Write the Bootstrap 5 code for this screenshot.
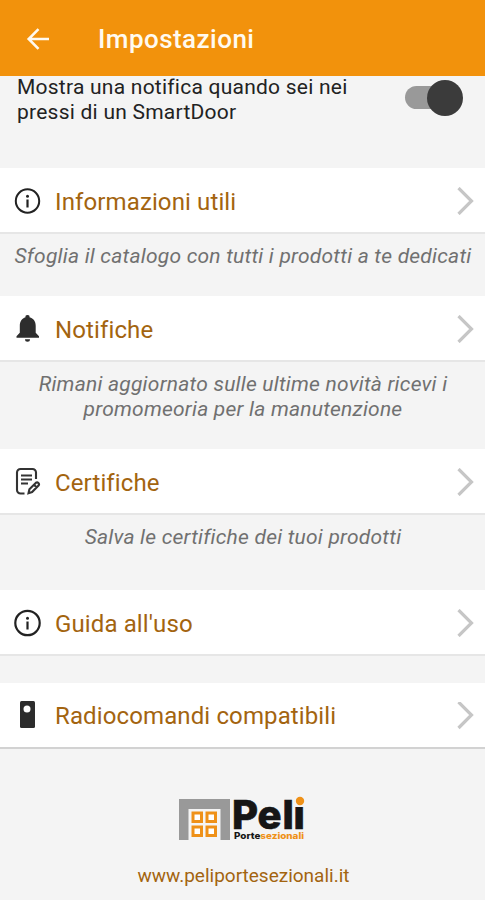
<!DOCTYPE html>
<html lang="it">
<head>
<meta charset="utf-8">
<meta name="viewport" content="width=device-width, initial-scale=1">
<title>Impostazioni</title>
<link href="https://cdn.jsdelivr.net/npm/bootstrap@5.3.0/dist/css/bootstrap.min.css" rel="stylesheet">
<style>
body{font-family:Roboto,"Liberation Sans",sans-serif;background:#f4f4f4;height:900px;overflow:hidden}
.topbar{height:76px;background:#f2920c;padding:2px 0 0 26px}
.topbar h1{font-size:26px;font-weight:500;letter-spacing:.45px;line-height:32px;margin-left:48px;color:#fffaf0}
.notice{height:92px;padding:0 22px 0 17px;color:#222}
.notice p{font-size:21px;line-height:25px;letter-spacing:.24px;margin-top:-1px}
.toggle-track{width:54px;height:23px;border-radius:12px;background:#999;margin:10px 4px 0 0}
.toggle-knob{width:36px;height:36px;border-radius:50%;background:#3b3b3b;flex:none;margin:0 -4px 0 auto}
.entry{height:66px;background:#fff;border-bottom:2px solid #e6e6e6;padding:2px 10px 0 14px;color:#a3640f;text-decoration:none;font-size:24px;letter-spacing:.12px}
.entry:hover{color:#a3640f}
.entry span{padding-top:2px}
.entry svg:first-child{margin-right:14px}
.entry.last{border-bottom-color:#d2d2d2}
.entry.last span{padding-top:0}
.hint{font-size:21px;line-height:25px;font-style:italic;color:#707070;text-align:center;padding:10px 0 0 1px;letter-spacing:.22px}
.site{font-size:19px;color:#a3640f;text-decoration:none;letter-spacing:0;line-height:24px;margin:19px 0 0 2px}
.ic{width:27px;height:28px;flex:none;overflow:visible}
.chev{width:18px;height:28px;flex:none}
.logo{overflow:visible}
.h-a{height:62px}.h-b{height:87px}.h-c{height:75px}.h-d{height:27px}
</style>
<script src="https://cdn.jsdelivr.net/npm/bootstrap@5.3.0/dist/js/bootstrap.bundle.min.js"></script>
</head>
<body>
<header class="topbar d-flex align-items-center">
  <svg width="24" height="24" viewBox="0 0 24 24" fill="none" stroke="#fffaf0" stroke-width="2.600"><path d="M23 12H3.500M12.500 2.200L2.700 12l9.800 9.800"/></svg>
  <h1 class="mb-0">Impostazioni</h1>
</header>
<main>
  <section class="notice d-flex justify-content-between">
    <p class="mb-0">Mostra una notifica quando sei nei<br>pressi di un SmartDoor</p>
    <div class="toggle-track d-flex align-items-center"><div class="toggle-knob"></div></div>
  </section>

  <a href="#" class="entry d-flex align-items-center">
    <svg class="ic" viewBox="0 0 27 28"><circle cx="13.500" cy="14" r="11.700" fill="none" stroke="#222" stroke-width="2"/><circle cx="13.500" cy="9.300" r="1.500" fill="#222"/><path d="M13.500 12.500v8" stroke="#222" stroke-width="2.200"/></svg>
    <span>Informazioni utili</span>
    <svg class="chev ms-auto" viewBox="0 0 18 28" fill="none" stroke="#c6c6c6" stroke-width="3.200"><path d="M1.500 1l13 13-13 13"/></svg>
  </a>
  <p class="hint h-a mb-0">Sfoglia il catalogo con tutti i prodotti a te dedicati</p>

  <a href="#" class="entry d-flex align-items-center">
    <svg class="ic" viewBox="0 0 27 28" fill="#2d2d2d"><path d="M13.500 0a2 2 0 0 1 2 2.300c4 1 6.200 4.300 6.200 8.500v7l3.300 3.400v1.600H2.500v-1.600l3.300-3.400v-7c0-4.200 2.200-7.500 5.700-8.500A2 2 0 0 1 13.500 0zM11 24.300h5a2.500 2.500 0 0 1-5 0z"/></svg>
    <span>Notifiche</span>
    <svg class="chev ms-auto" viewBox="0 0 18 28" fill="none" stroke="#c6c6c6" stroke-width="3.200"><path d="M1.500 1l13 13-13 13"/></svg>
  </a>
  <p class="hint h-b mb-0">Rimani aggiornato sulle ultime novità ricevi i<br>promomeoria per la manutenzione</p>

  <a href="#" class="entry d-flex align-items-center">
    <svg class="ic" viewBox="0 0 27 28" fill="none" stroke="#333" stroke-width="2.100"><path d="M10.500 25.500H6.500a3.500 3.500 0 0 1-3.500-3.500V4.500A3.500 3.500 0 0 1 6.500 1h12A3.500 3.500 0 0 1 22 4.500V11M7 7.500h11M7 11.500h11M7 15.500h7"/><path d="M14.500 25.200l.9-4 6.300-6.300c1.900-1.600 4.300.8 2.800 2.700l-6.400 6.400zM20 16.800l2.700 2.700"/></svg>
    <span>Certifiche</span>
    <svg class="chev ms-auto" viewBox="0 0 18 28" fill="none" stroke="#c6c6c6" stroke-width="3.200"><path d="M1.500 1l13 13-13 13"/></svg>
  </a>
  <p class="hint h-c mb-0">Salva le certifiche dei tuoi prodotti</p>

  <a href="#" class="entry d-flex align-items-center">
    <svg class="ic" viewBox="0 0 27 28"><circle cx="13.500" cy="14" r="12.200" fill="none" stroke="#222" stroke-width="2.200"/><circle cx="13.500" cy="9.300" r="1.500" fill="#222"/><path d="M13.500 12.500v8" stroke="#222" stroke-width="2.200"/></svg>
    <span>Guida all'uso</span>
    <svg class="chev ms-auto" viewBox="0 0 18 28" fill="none" stroke="#c6c6c6" stroke-width="3.200"><path d="M1.500 1l13 13-13 13"/></svg>
  </a>
  <div class="h-d"></div>

  <a href="#" class="entry last d-flex align-items-center">
    <svg class="ic" viewBox="0 0 27 28"><rect x="6" y="-1" width="15" height="27" rx="1.500" fill="#2c2c2c"/><circle cx="13" cy="7" r="3.500" fill="#fff"/></svg>
    <span>Radiocomandi compatibili</span>
    <svg class="chev ms-auto" viewBox="0 0 18 28" fill="none" stroke="#c6c6c6" stroke-width="3.200"><path d="M1.500 0l13 13-13 13"/></svg>
  </a>
</main>
<footer class="d-flex flex-column align-items-center pt-5">
  <svg class="logo" width="130" height="48" viewBox="0 0 130 48" role="img" aria-label="Peli Portesezionali">
    <path d="M1 2h51v41H42.500V12H10.500v31H1z" fill="#999"/>
    <g fill="#fff" stroke="#ef9118" stroke-width="3"><rect x="15" y="16" width="8.500" height="8.500"/><rect x="29" y="16" width="8.500" height="8.500"/><rect x="15" y="30" width="8.500" height="8.500"/><rect x="29" y="30" width="8.500" height="8.500"/></g>
    <text x="54 79.500 104.500 115.500" y="32" font-family="Inter,sans-serif" font-weight="800" font-size="40" fill="#161616" stroke="#161616" stroke-width=".7">Peli</text>
    <rect x="116.500" y="-2" width="13" height="12" fill="#f4f4f4"/><circle cx="122" cy="4" r="4.200" fill="#ef9118"/>
    <text x="56" y="42" font-family="Inter,sans-serif" font-weight="800" font-size="9" textLength="70" lengthAdjust="spacingAndGlyphs" fill="#161616">Porte<tspan fill="#ef9118">sezionali</tspan></text>
  </svg>
  <a href="#" class="site">www.peliportesezionali.it</a>
</footer>
</body>
</html>
